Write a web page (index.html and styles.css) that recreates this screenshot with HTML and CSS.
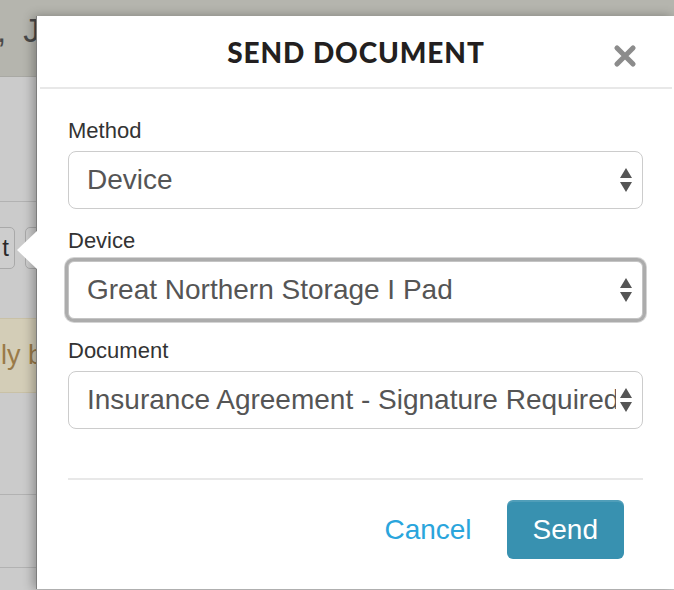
FILE: index.html
```html
<!DOCTYPE html>
<html>
<head>
<meta charset="utf-8">
<link rel="stylesheet" href="styles.css">
</head>
<body>
<div class="page">
  <div class="topbar"><span class="topname">, J</span></div>
  <div class="area">
    <div class="row row-a"></div>
    <div class="row-btns">
      <span class="bgbtn bgbtn-a">t</span>
      <span class="bgbtn bgbtn-b"></span>
    </div>
    <div class="alert">ly b</div>
    <div class="row row-c"></div>
    <div class="row row-d"></div>
    <div class="row row-e"></div>
  </div>

  <div class="modal">
    <div class="modal-header">
      <h1 class="modal-title">SEND DOCUMENT</h1>
      <span class="close">
        <svg width="24" height="24" viewBox="0 0 24 24"><path d="M4 4 L20 20 M20 4 L4 20" stroke="#8c8c8c" stroke-width="5.2" stroke-linecap="round" fill="none"/></svg>
      </span>
    </div>
    <div class="modal-body">
      <div class="group">
        <div class="label">Method</div>
        <div class="select"><span class="value">Device</span><svg class="arrows" width="14" height="26" viewBox="0 0 14 26"><path d="M7 1 L13 11 L1 11 Z M1 15 L13 15 L7 25 Z" fill="#555"/></svg></div>
      </div>
      <div class="group">
        <div class="label">Device</div>
        <div class="select focused"><span class="value">Great Northern Storage I Pad</span><svg class="arrows" width="14" height="26" viewBox="0 0 14 26"><path d="M7 1 L13 11 L1 11 Z M1 15 L13 15 L7 25 Z" fill="#555"/></svg></div>
      </div>
      <div class="group">
        <div class="label">Document</div>
        <div class="select"><span class="value">Insurance Agreement - Signature Required</span><svg class="arrows" width="14" height="26" viewBox="0 0 14 26"><path d="M7 1 L13 11 L1 11 Z M1 15 L13 15 L7 25 Z" fill="#555"/></svg></div>
      </div>
    </div>
    <div class="modal-footer">
      <a class="cancel">Cancel</a>
      <button class="send">Send</button>
    </div>
  </div>
</div>
</body>
</html>
```
FILE: styles.css
```css
html, body {
  margin: 0;
  padding: 0;
}
body {
  width: 674px;
  height: 590px;
  overflow: hidden;
  font-family: "Liberation Sans", Arial, sans-serif;
  background: #cbcbcb;
}
.page {
  position: relative;
  width: 674px;
  height: 590px;
  overflow: hidden;
}
.topbar {
  height: 77px;
  background: #b5b5ae;
  border-bottom: 1px solid #a9a9a4;
  box-sizing: border-box;
  padding-top: 12px;
  white-space: nowrap;
}
.topname {
  font-family: "Liberation Sans", Arial, sans-serif;
  font-size: 33px;
  color: #4a4a4a;
  margin-left: -3px;
  letter-spacing: 4px;
}
.area {
  display: flex;
  flex-direction: column;
}
.row {
  border-bottom: 1px solid #b2b2b2;
}
.row-a { height: 124px; }
.row-btns {
  height: 42px;
  padding-top: 25px;
  display: flex;
  gap: 10px;
  margin-left: -16px;
}
.bgbtn {
  height: 42px;
  border: 1px solid #a9a9a9;
  border-radius: 5px;
  background: #cdcdcd;
  box-sizing: border-box;
  font-size: 24px;
  line-height: 40px;
  color: #2a2a2a;
  padding: 0 5px;
}
.bgbtn-a { width: 31px; text-align: right; }
.bgbtn-b { width: 30px; }
.alert {
  margin-top: 49px;
  height: 75px;
  background: #d3cdb7;
  border-top: 1px solid #c9c1a6;
  border-bottom: 1px solid #c9c1a6;
  box-sizing: border-box;
  font-size: 27px;
  line-height: 73px;
  color: #9a7a48;
  padding-left: 1px;
  white-space: nowrap;
}
.row-c { height: 101px; }
.row-d { height: 72px; }
.row-e { height: 40px; }

/* modal */
.modal {
  position: absolute;
  left: 36px;
  top: 16px;
  width: 638px;
  height: 573px;
  background: #fff;
  border-left: 1px solid #7d7d7d;
  box-sizing: border-box;
  box-shadow: -3px 0 10px rgba(0,0,0,0.3);
  display: flex;
  flex-direction: column;
}
.modal::before {
  content: "";
  position: absolute;
  left: -20px;
  top: 214px;
  border-top: 20px solid transparent;
  border-bottom: 20px solid transparent;
  border-right: 21px solid #fff;
}
.modal-header {
  height: 73px;
  box-sizing: border-box;
  border-bottom: 2px solid #e8e8e8;
  margin: 0 2px 0 3px;
  display: flex;
  align-items: center;
  justify-content: center;
  position: relative;
}
.modal-title {
  margin: 0;
  font-family: Lato, "Liberation Sans", sans-serif;
  font-weight: 900;
  font-size: 28px;
  color: #231f20;
  letter-spacing: 0.9px;
}
.close {
  position: absolute;
  right: 35px;
  top: 28px;
  width: 24px;
  height: 24px;
}
.modal-body {
  padding: 29px 31px 30px 31px;
}
.group {
  margin-bottom: 19px;
}
.label {
  font-size: 22px;
  line-height: 25px;
  color: #333;
  margin-bottom: 8px;
}
.select {
  height: 58px;
  border: 1px solid #cccccc;
  border-radius: 8px;
  box-sizing: border-box;
  display: flex;
  align-items: center;
  padding: 0 9px 0 18px;
  background: #fff;
}
.select.focused {
  border-color: #c4c4c4;
  box-shadow: 0 0 0 3px #acacac, 0 0 0 4px #d4d4d4;
  border-radius: 6px;
}
.value {
  flex: 1;
  font-size: 28px;
  color: #555;
  white-space: nowrap;
  overflow: hidden;
}
.arrows {
  flex: none;
  margin-left: 3px;
}
.modal-footer {
  margin: 0 31px;
  border-top: 2px solid #e8e8e8;
  padding: 20px 19px 0 0;
  display: flex;
  justify-content: flex-end;
  align-items: center;
  gap: 35px;
}
.cancel {
  font-size: 28px;
  color: #2aa5dc;
}
.send {
  height: 59px;
  padding: 0 26px;
  border: none;
  border-radius: 6px;
  background: #3891b0;
  color: #fff;
  font-family: "Liberation Sans", Arial, sans-serif;
  font-size: 28px;
  box-shadow: inset 0 2px 0 rgba(255,255,255,0.12);
}
```
